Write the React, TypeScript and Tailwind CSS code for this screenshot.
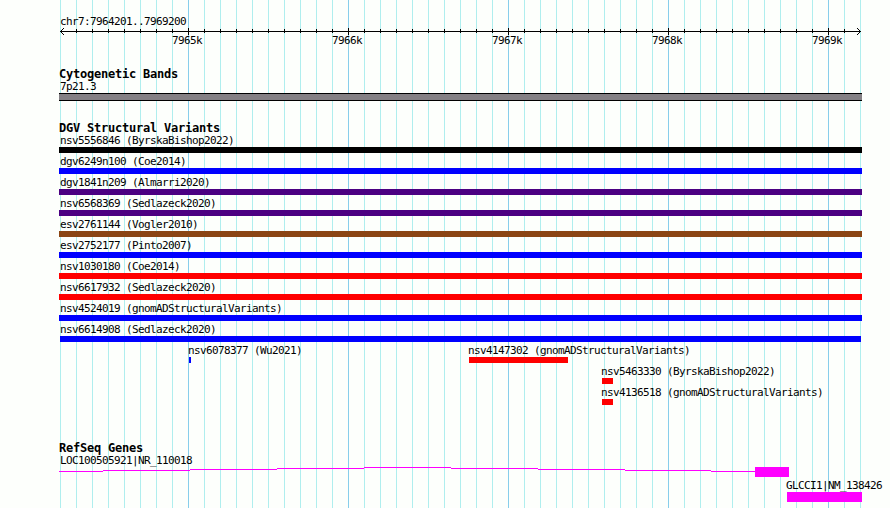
import { clsx } from 'clsx';

const LEFT = 60;
const MINOR_STEP = 16;

type Feature = {
  name: string;
  start: number;
  end: number;
  color: string;
};

// every inner array is one row of the track, positions are in pixels
const variantRows: Feature[][] = [
  [{ name: 'nsv5556846 (ByrskaBishop2022)', start: 59, end: 862, color: 'bg-black' }],
  [{ name: 'dgv6249n100 (Coe2014)', start: 59, end: 862, color: 'bg-[#0000ff]' }],
  [{ name: 'dgv1841n209 (Almarri2020)', start: 59, end: 862, color: 'bg-[#4b0082]' }],
  [{ name: 'nsv6568369 (Sedlazeck2020)', start: 59, end: 862, color: 'bg-[#4b0082]' }],
  [{ name: 'esv2761144 (Vogler2010)', start: 59, end: 862, color: 'bg-[#8b4513]' }],
  [{ name: 'esv2752177 (Pinto2007)', start: 59, end: 862, color: 'bg-[#0000ff]' }],
  [{ name: 'nsv1030180 (Coe2014)', start: 59, end: 862, color: 'bg-[#ff0000]' }],
  [{ name: 'nsv6617932 (Sedlazeck2020)', start: 59, end: 862, color: 'bg-[#ff0000]' }],
  [{ name: 'nsv4524019 (gnomADStructuralVariants)', start: 59, end: 862, color: 'bg-[#0000ff]' }],
  [{ name: 'nsv6614908 (Sedlazeck2020)', start: 60, end: 861, color: 'bg-[#0000ff]' }],
  [
    { name: 'nsv6078377 (Wu2021)', start: 189, end: 191, color: 'bg-[#0000ff]' },
    { name: 'nsv4147302 (gnomADStructuralVariants)', start: 469, end: 568, color: 'bg-[#ff0000]' },
  ],
  [{ name: 'nsv5463330 (ByrskaBishop2022)', start: 602, end: 613, color: 'bg-[#ff0000]' }],
  [{ name: 'nsv4136518 (gnomADStructuralVariants)', start: 602, end: 613, color: 'bg-[#ff0000]' }],
];

const ticks = Array.from({ length: 51 }, (_, i) => ({
  x: LEFT + i * MINOR_STEP,
  major: i % 10 === 8,
}));

const tickLabels = ['7965k', '7966k', '7967k', '7968k', '7969k'];

function GridLines() {
  return (
    <div className="absolute inset-0 flex gap-[15px] pl-[60px]">
      {ticks.map((t) => (
        <div key={t.x} className={clsx('w-px shrink-0', t.major ? 'bg-[#87ceeb]' : 'bg-[#afeeee]')} />
      ))}
    </div>
  );
}

function Label({ children }: { children: string }) {
  return (
    <div className="h-[15px] w-0 text-[11px] leading-[17px] tracking-[-0.622px] whitespace-nowrap">
      {children}
    </div>
  );
}

function TrackTitle({ children }: { children: string }) {
  return (
    <h2 className="h-3 pl-[59px] text-[12px] leading-3 font-bold tracking-[-0.225px] whitespace-nowrap">
      {children}
    </h2>
  );
}

function Ruler() {
  return (
    <div className="h-[34px]">
      <svg className="block" width="890" height="9" shapeRendering="crispEdges">
        <path d="M60 3.5H861" stroke="#000" fill="none" />
        <path d="M63.5 0v1M62.5 1v1M61.5 2v1M60.5 3v1M61.5 4v1M62.5 5v1M63.5 6v1" stroke="#000" />
        <path d="M857.5 0v1M858.5 1v1M859.5 2v1M860.5 3v1M859.5 4v1M858.5 5v1M857.5 6v1" stroke="#000" />
        {ticks.slice(1, -1).map((t) => (
          <path
            key={t.x}
            d={t.major ? `M${t.x + 0.5} 0v7` : `M${t.x + 0.5} 1v4`}
            stroke="#000"
          />
        ))}
      </svg>
      <div className="-mt-[3px] flex pl-[172px]">
        {tickLabels.map((label) => (
          <div
            key={label}
            className="w-[160px] shrink-0 text-[11px] leading-[14px] tracking-[-0.622px]"
          >
            {label}
          </div>
        ))}
      </div>
    </div>
  );
}

function FeatureRow({ features }: { features: Feature[] }) {
  return (
    <div className="flex h-[21px]">
      {features.map((f, i) => {
        const prevEnd = i === 0 ? 0 : features[i - 1].end;
        // labels never start left of the plot area
        const labelStart = Math.max(f.start - 1, LEFT);
        return (
          <div
            key={f.name}
            className="shrink-0"
            style={{ marginLeft: f.start - prevEnd, width: f.end - f.start }}
          >
            <div style={{ marginLeft: labelStart - f.start }}>
              <Label>{f.name}</Label>
            </div>
            <div className={clsx('h-1.5', f.color)} />
          </div>
        );
      })}
    </div>
  );
}

function GeneTrack() {
  return (
    <div>
      <div className="h-[15px] pl-[60px]">
        <Label>LOC100505921|NR_110018</Label>
      </div>
      <svg className="block" width="890" height="10" shapeRendering="crispEdges">
        <path
          d="M59 4.5H103M103 3.5H190M190 2.5H277M277 1.5H364M364 .5H451M451 1.5H538M538 2.5H625M625 3.5H711M711 4.5H755"
          stroke="#ff00ff"
        />
        <rect x="755" y="0" width="34" height="10" fill="#ff00ff" />
      </svg>
      <div className="pl-[786px]">
        <Label>GLCCI1|NM_138426</Label>
        <div className="ml-px h-2.5 w-[75px] bg-[#ff00ff]" />
      </div>
    </div>
  );
}

export default function App() {
  return (
    <div className="relative h-[508px] w-[890px] overflow-hidden bg-[#fdfffc] font-['DejaVu_Sans_Mono',monospace] text-black">
      <GridLines />
      <div className="relative">
        <div className="h-7 pt-[13px] pl-[60px]">
          <Label>chr7:7964201..7969200</Label>
        </div>
        <Ruler />

        <section className="pt-1.5">
          <TrackTitle>Cytogenetic Bands</TrackTitle>
          <div className="-mt-0.5 h-[15px] pl-[60px]">
            <Label>7p21.3</Label>
          </div>
          <div className="ml-[59px] h-2 w-[803px] border-y border-black bg-[#848084]" />
        </section>

        <section className="pt-[21px]">
          <TrackTitle>DGV Structural Variants</TrackTitle>
          <div className="-mt-[2px]">
            {variantRows.map((row) => (
              <FeatureRow key={row[0].name} features={row} />
            ))}
          </div>
        </section>

        <section className="pt-[37px]">
          <TrackTitle>RefSeq Genes</TrackTitle>
          <div className="-mt-[2px]">
            <GeneTrack />
          </div>
        </section>
      </div>
    </div>
  );
}
